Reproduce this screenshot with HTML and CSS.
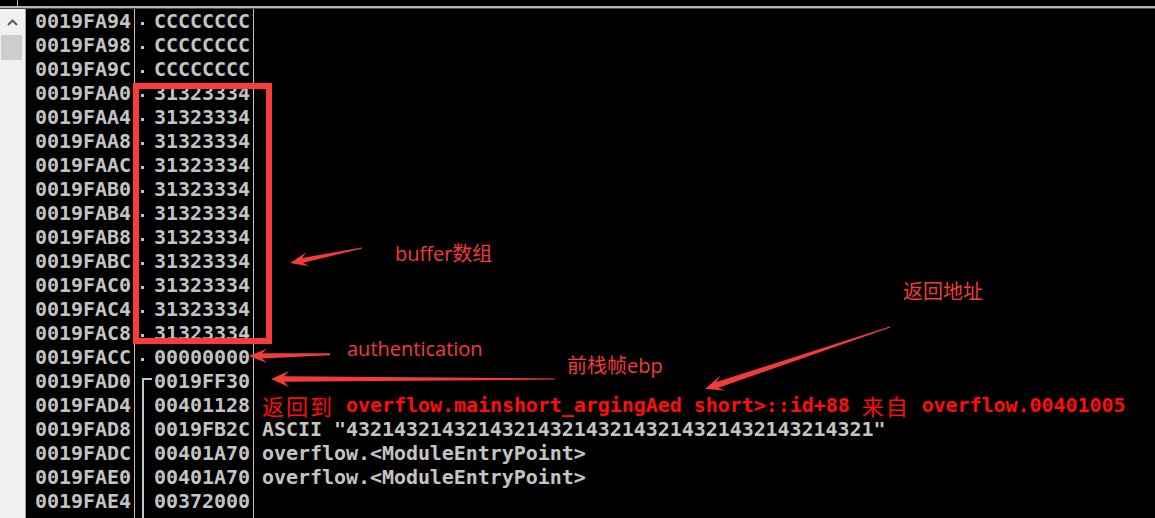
FILE: index.html
```html
<!DOCTYPE html>
<html>
<head>
<meta charset="utf-8">
<link rel="stylesheet" href="styles.css">
</head>
<body>
<div class="topbar"><div class="tcell"></div></div>
<div class="main">
  <div class="scroll">
    <div class="up"><svg width="11" height="7" viewBox="0 0 11 7"><path d="M1 6 L5.5 1.5 L10 6" fill="none" stroke="#606060" stroke-width="2"/></svg></div>
    <div class="thumb"></div>
  </div>
  <div class="col col-addr">
    <div class="row">0019FA94</div>
    <div class="row">0019FA98</div>
    <div class="row">0019FA9C</div>
    <div class="row">0019FAA0</div>
    <div class="row">0019FAA4</div>
    <div class="row">0019FAA8</div>
    <div class="row">0019FAAC</div>
    <div class="row">0019FAB0</div>
    <div class="row">0019FAB4</div>
    <div class="row">0019FAB8</div>
    <div class="row">0019FABC</div>
    <div class="row">0019FAC0</div>
    <div class="row">0019FAC4</div>
    <div class="row">0019FAC8</div>
    <div class="row">0019FACC</div>
    <div class="row">0019FAD0</div>
    <div class="row">0019FAD4</div>
    <div class="row">0019FAD8</div>
    <div class="row">0019FADC</div>
    <div class="row">0019FAE0</div>
    <div class="row">0019FAE4</div>
  </div>
  <div class="col col-val">
    <div class="row"><span class="mk dot"></span>CCCCCCCC</div>
    <div class="row"><span class="mk dot"></span>CCCCCCCC</div>
    <div class="row"><span class="mk dot"></span>CCCCCCCC</div>
    <div class="row"><span class="mk dot"></span>31323334</div>
    <div class="row"><span class="mk dot"></span>31323334</div>
    <div class="row"><span class="mk dot"></span>31323334</div>
    <div class="row"><span class="mk dot"></span>31323334</div>
    <div class="row"><span class="mk dot"></span>31323334</div>
    <div class="row"><span class="mk dot"></span>31323334</div>
    <div class="row"><span class="mk dot"></span>31323334</div>
    <div class="row"><span class="mk dot"></span>31323334</div>
    <div class="row"><span class="mk dot"></span>31323334</div>
    <div class="row"><span class="mk dot"></span>31323334</div>
    <div class="row"><span class="mk dot"></span>31323334</div>
    <div class="row"><span class="mk dot"></span>00000000</div>
    <div class="row"><span class="mk brtop"></span>0019FF30</div>
    <div class="row"><span class="mk brmid"></span>00401128</div>
    <div class="row"><span class="mk brmid"></span>0019FB2C</div>
    <div class="row"><span class="mk brmid"></span>00401A70</div>
    <div class="row"><span class="mk brmid"></span>00401A70</div>
    <div class="row"><span class="mk brmid"></span>00372000</div>
    <div class="row"><span class="mk brmid"></span></div>
  </div>
  <div class="col col-cmt">
    <div class="row"></div>
    <div class="row"></div>
    <div class="row"></div>
    <div class="row"></div>
    <div class="row"></div>
    <div class="row"></div>
    <div class="row"></div>
    <div class="row"></div>
    <div class="row"></div>
    <div class="row"></div>
    <div class="row"></div>
    <div class="row"></div>
    <div class="row"></div>
    <div class="row"></div>
    <div class="row"></div>
    <div class="row"></div>
    <div class="row red"><span class="cjk">返回到</span> overflow.mainshort_argingAed short&gt;::id+88 <span class="cjk">来自</span> overflow.00401005</div>
    <div class="row">ASCII "43214321432143214321432143214321432143214321"</div>
    <div class="row">overflow.&lt;ModuleEntryPoint&gt;</div>
    <div class="row">overflow.&lt;ModuleEntryPoint&gt;</div>
    <div class="row"></div>
  </div>
</div>

<svg class="overlay" width="1155" height="518" viewBox="0 0 1155 518">
  <rect x="136" y="86" width="133" height="255" fill="none" stroke="#f83b3b" stroke-width="6"/>
  <polygon fill="#f23c3c" points="361.9,247.5 302.2,257.9 306.2,252.5 290,263 309.1,266.2 303.2,262.8 362.1,248.5"/>
  <polygon fill="#f23c3c" points="330,353.3 262,353.2 267,348.6 249,356 267,363 262,358.4 330,355.2"/>
  <polygon fill="#f23c3c" points="555,378.4 284,376.3 289,371 271,379 289,387 284,381.7 555,379.6"/>
  <polygon fill="#f23c3c" points="889.8,326.5 716.4,382.0 720.5,375.4 705,389 725.6,390.6 718.3,387.7 890.2,327.5"/>
</svg>
<div class="lbl l-buf">buffer数组</div>
<div class="lbl l-auth">authentication</div>
<div class="lbl l-ebp">前栈帧ebp</div>
<div class="lbl l-ret">返回地址</div>
</body>
</html>
```

FILE: styles.css
```css
html, body {
  margin: 0;
  padding: 0;
}
body {
  background: #000;
  width: 1155px;
  height: 518px;
  overflow: hidden;
  position: relative;
  font-family: "DejaVu Sans Mono", "Liberation Mono", monospace;
}
.topbar {
  height: 6px;
  border-bottom: 2px solid #b4b4b4;
  display: flex;
}
.tcell {
  width: 17px;
  border-right: 1px solid #b4b4b4;
}
.main {
  display: flex;
  border-top: 1px solid #4a4a4a;
  height: 509px;
}
.scroll {
  flex: none;
  width: 25px;
  background: #f0f0f0;
  border-right: 1px solid #a0a0a0;
  display: flex;
  flex-direction: column;
}
.up {
  height: 26px;
  display: flex;
  align-items: center;
  justify-content: center;
}
.thumb {
  margin-left: 1px;
  width: 21px;
  height: 25px;
  background: #cdcdcd;
}
.col {
  flex: none;
}
.col-addr {
  width: 99px;
  padding-left: 9px;
  border-right: 1px solid #c0c0c0;
}
.col-val {
  width: 118px;
  border-right: 1px solid #c0c0c0;
}
.col-cmt {
  flex: 1;
  padding-left: 8px;
}
.row {
  height: 24px;
  line-height: 24px;
  font-size: 20px;
  font-weight: bold;
  color: #c4c4c4;
  white-space: pre;
  display: flex;
  letter-spacing: -0.05px;
}
.mk {
  flex: none;
  width: 19px;
  height: 24px;
}
.mk.dot::before {
  content: "";
  display: block;
  margin: 13px 0 0 6px;
  width: 3px;
  height: 3px;
  background: #c4c4c4;
}
.mk.brtop::before {
  content: "";
  display: block;
  margin: 9px 0 0 7px;
  width: 8px;
  height: 13px;
  border-left: 2px solid #c4c4c4;
  border-top: 2px solid #c4c4c4;
}
.mk.brmid::before {
  content: "";
  display: block;
  margin-left: 7px;
  height: 24px;
  border-left: 2px solid #c4c4c4;
}
.red {
  color: #ff0c0c;
}
.cjk {
  font-family: "Noto Sans CJK SC", sans-serif;
  font-size: 22px;
  letter-spacing: 2px;
  font-weight: 400;
  line-height: 24px;
}
.overlay {
  position: absolute;
  left: 0;
  top: 0;
}
.lbl {
  position: absolute;
  font-family: "Open Sans", "Noto Sans CJK SC", sans-serif;
  font-size: 20px;
  line-height: 24px;
  color: #f03c3c;
  white-space: nowrap;
}
.l-buf { left: 395px; top: 242px; }
.l-auth { left: 347px; top: 337px; }
.l-ebp { left: 567px; top: 354px; }
.l-ret { left: 903px; top: 280px; }
```
